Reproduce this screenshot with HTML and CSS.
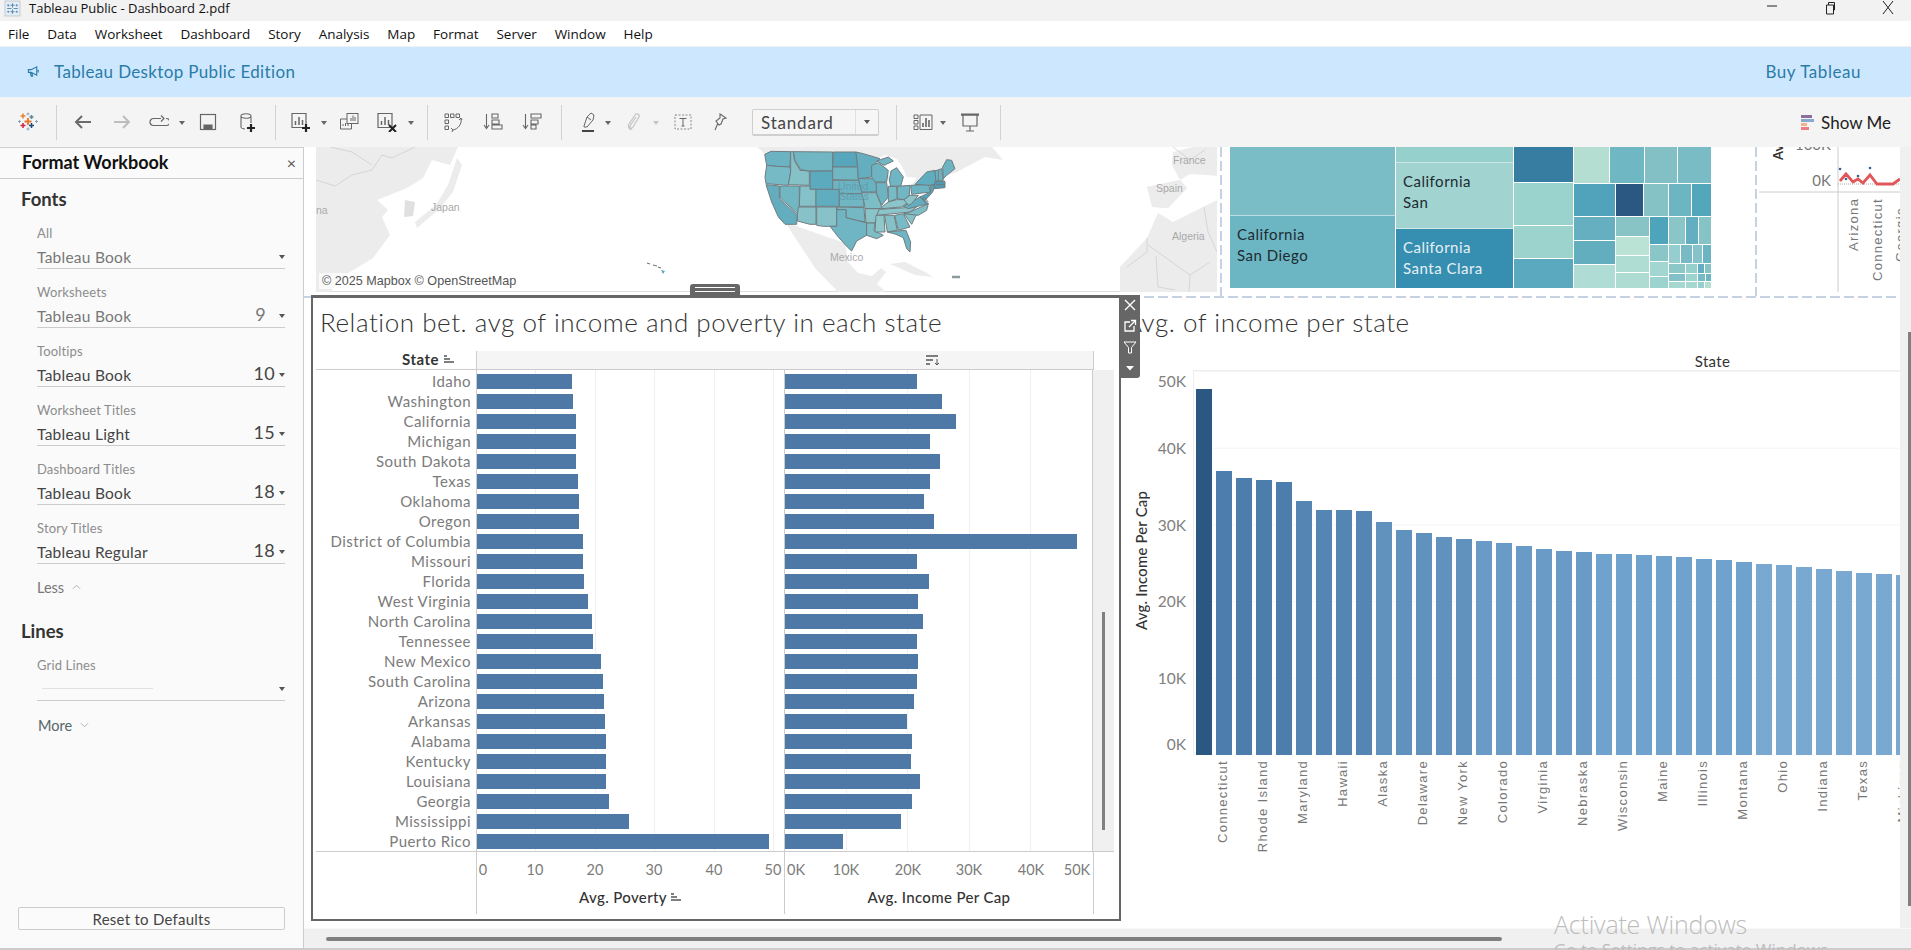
FILE: index.html
```html
<!DOCTYPE html>
<html lang="en">
<head>
<meta charset="utf-8">
<title>Tableau Public - Dashboard 2.pdf</title>
<link rel="stylesheet" href="styles.css">
</head>
<body>
<div class="app">
  <header class="titlebar">
    <svg class="app-icon" viewBox="0 0 16 16"><rect x="1" y="1" width="14" height="14" fill="#e6eef5" stroke="#c4ccd4"/><path d="M8 3v4M6 5h4M8 9v4M6 11h4M3 8h4M9 8h4M4 4v2M3 5h2M12 4v2M11 5h2M4 10v2M3 11h2M12 10v2M11 11h2" stroke="#5b8db8" fill="none"/></svg>
    <span class="title-text">Tableau Public - Dashboard 2.pdf</span>
    <div class="win-controls">
      <svg class="win-btn" viewBox="0 0 14 14"><path d="M2 5h10" stroke="#222"/></svg>
      <svg class="win-btn" viewBox="0 0 14 14"><path d="M3.500 4h7v9h-7zM5.500 4V1.500h6V9h-1" stroke="#222" fill="none"/></svg>
      <svg class="win-btn" viewBox="0 0 14 14"><path d="M2 0l10 13M12 0L2 13" stroke="#222" fill="none"/></svg>
    </div>
  </header>

  <nav class="menubar">
    <span>File</span><span>Data</span><span>Worksheet</span><span>Dashboard</span><span>Story</span><span>Analysis</span><span>Map</span><span>Format</span><span>Server</span><span>Window</span><span>Help</span>
  </nav>

  <div class="banner">
    <svg class="mega" viewBox="0 0 14 14"><path d="M1.500 5h3l6-3v9l-6-3h-3zM3.500 8l1 4h1.500l-.8-3.300M12 5v3" fill="none" stroke="#2b7da8" stroke-width="1.200"/></svg>
    <span class="banner-text">Tableau Desktop Public Edition</span>
    <span class="buy">Buy Tableau</span>
  </div>

  <div class="toolbar">
    <svg class="ic logo" viewBox="0 0 20 20" fill="none" stroke-width="1.500">
      <path d="M6.500 0v5M4 2.500h5" transform="translate(-1.500 1.500)" stroke="#e8812f"/>
      <path d="M13.500 3v4M11.500 5h4" stroke="#5b879b"/>
      <path d="M10 6v7M6.500 9.500h7" stroke="#e8762c" stroke-width="1.800"/>
      <path d="M5 11v5M2.500 13.500h5" stroke="#d0213f"/>
      <path d="M13.500 11v5M11 13.500h5" stroke="#1f4a78"/>
      <path d="M10 .5v3M8.500 2h3M10 15.500v3M8.500 17h3M1.500 8v3M0 9.500h3M18.500 8v3M17 9.500h3" stroke="#8aa4bb" stroke-width="1"/>
    </svg>
    <i class="sep g18"></i>
    <svg class="ic g16" viewBox="0 0 20 20" fill="none" stroke="#6b6b6b" stroke-width="2"><path d="M18 10H3M9 4l-6 6 6 6"/></svg>
    <svg class="ic g19" viewBox="0 0 20 20" fill="none" stroke="#bdbdbd" stroke-width="2"><path d="M2 10h15M11 4l6 6-6 6"/></svg>
    <svg class="ic g17" viewBox="0 0 20 20" fill="none" stroke="#666" stroke-width="1.200"><path d="M1 10a3.500 3.500 0 0 1 3.500-3.500H12M12 3.500l3 3-3 3M17 6.500a3.500 3.500 0 0 1 .5 7H4.500A3.500 3.500 0 0 1 1 10"/></svg>
    <i class="caret g10"></i>
    <svg class="ic g12" viewBox="0 0 20 20" fill="none" stroke="#666" stroke-width="1.200"><rect x="2.500" y="2.500" width="15" height="15"/><path d="M6 17v-4h8v4z" fill="#666"/></svg>
    <svg class="ic g19" viewBox="0 0 20 20" fill="none" stroke="#666" stroke-width="1.100"><path d="M4 4c0-3 10-3 10 0v7M4 4c0 3 10 3 10 0M4 4v11c0 1 2 2 4 2"/><path d="M14 12v8M10 16h8" stroke="#222" stroke-width="2.200"/></svg>
    <i class="sep g18"></i>
    <svg class="ic g15" viewBox="0 0 20 20" fill="none" stroke="#666" stroke-width="1.200"><path d="M1 1.500h14v14H1z"/><path d="M4.500 13V9M8 13V5M11.500 13V8" stroke-width="1.500"/><path d="M15 12v8M11 16h8" stroke="#222" stroke-width="2.200"/></svg>
    <i class="caret g10"></i>
    <svg class="ic g11" viewBox="0 0 20 20" fill="none" stroke="#666" stroke-width="1"><rect x="8" y="1.500" width="11" height="10" fill="#f4f4f4"/><path d="M8 7H1.500v10h11v-5.500"/><path d="M12 9V6M14 9V3.500M16 9V5M4 14v-2M6.500 14v-3M9 14v-2"/></svg>
    <svg class="ic g18" viewBox="0 0 20 20" fill="none" stroke="#666" stroke-width="1.200"><path d="M1 1.500h14v14H1z"/><path d="M4.500 13V9M8 13V5M11.500 13V8" stroke-width="1.500"/><path d="M12 13l7 7M19 13l-7 7" stroke="#222" stroke-width="2"/></svg>
    <i class="caret g11"></i>
    <i class="sep g12"></i>
    <svg class="ic g15" viewBox="0 0 20 20" fill="none" stroke="#666" stroke-width="1"><path d="M2 2h3.500v3.500H2zM7.500 2H11v3.500H7.500zM13 2h3.500v3.500H13zM2 8h3.500v3.500H2zM2 14h3.500v3.500H2z"/><path d="M18 7c1 5-3 10-8 11M8 16l2 2-1 2M16 8l2-2 1 2"/></svg>
    <svg class="ic g20" viewBox="0 0 20 20" fill="none" stroke="#666" stroke-width="1.100"><path d="M3.500 2v14M1 13l2.500 3.500L6 13"/><path d="M9 2h6v4H9zM9 8h7v4H9zM9 13h10v4H9z"/></svg>
    <svg class="ic g19" viewBox="0 0 20 20" fill="none" stroke="#666" stroke-width="1.100"><path d="M3.500 2v14M1 13l2.500 3.500L6 13"/><path d="M9 2h10v4H9zM9 8h7v4H9zM9 13h5v4H9z"/></svg>
    <i class="sep g19"></i>
    <svg class="ic g16" viewBox="0 0 20 20" fill="none" stroke="#666" stroke-width="1"><path d="M6 14L9 5l4-4 3 2-1 5-6 7H6zM9 5l4 3"/><path d="M4 19h12" stroke="#444" stroke-width="2"/></svg>
    <i class="caret g7"></i>
    <svg class="ic g11" viewBox="0 0 20 20" fill="none" stroke="#c6c6c6" stroke-width="1.300"><path d="M13 5l-6 9c-1 2 2 3 3 1l6-10c1-3-3-4-4-2L6 12c-2 3 1 6 3 5"/></svg>
    <i class="caret faint g10"></i>
    <svg class="ic g13" viewBox="0 0 20 20" fill="none" stroke="#888" stroke-width="1"><rect x="2" y="3" width="16" height="14" stroke-dasharray="2 1.500"/><path d="M6.500 6.500h7M10 6.500v7.500M8.500 14h3" stroke="#666"/></svg>
    <svg class="ic g17" viewBox="0 0 20 20" fill="none" stroke="#666" stroke-width="1.100"><path d="M10 2l6 4-3 1-2 5-2 1-3-4 4-3zM8 11l-3 7"/></svg>
    <div class="select g22"><span class="select-val">Standard</span><span class="select-arrow"><i class="caret dark"></i></span></div>
    <i class="sep g17"></i>
    <svg class="ic g16" viewBox="0 0 20 20" fill="none" stroke="#666" stroke-width="1"><path d="M1 3h4v3.500H1zM1 8.500h4V12H1zM1 14h4v3.500H1zM7 3h12v14.500H7z"/><path d="M10 15v-4M13 15V6M16 15V8" stroke-width="1.600"/></svg>
    <i class="caret g7"></i>
    <svg class="ic g13" viewBox="0 0 20 20" fill="none" stroke="#666" stroke-width="1.200"><path d="M1 3h18M3 3v11h14V3M10 14v5M6 19h8"/><path d="M1 2.500h18" stroke-width="2"/></svg>
    <i class="sep g20"></i>
    <div class="showme">
      <span class="sm-bars"><i class="sm1"></i><i class="sm2"></i><i class="sm3"></i><i class="sm4"></i></span>
      <span>Show Me</span>
    </div>
  </div>

  <main class="main">
    <aside class="side">
      <div class="side-head"><span>Format Workbook</span><span class="side-x">×</span></div>
      <h2 class="side-h">Fonts</h2>
      <div class="fld dim"><div class="fld-l">All</div><div class="fld-v"><span>Tableau Book</span><i class="caret dark"></i></div></div>
      <div class="fld dim"><div class="fld-l">Worksheets</div><div class="fld-v"><span>Tableau Book</span><b class="num n9">9</b><i class="caret dark"></i></div></div>
      <div class="fld"><div class="fld-l">Tooltips</div><div class="fld-v"><span>Tableau Book</span><b class="num">10</b><i class="caret dark"></i></div></div>
      <div class="fld"><div class="fld-l">Worksheet Titles</div><div class="fld-v"><span>Tableau Light</span><b class="num">15</b><i class="caret dark"></i></div></div>
      <div class="fld"><div class="fld-l">Dashboard Titles</div><div class="fld-v"><span>Tableau Book</span><b class="num">18</b><i class="caret dark"></i></div></div>
      <div class="fld"><div class="fld-l">Story Titles</div><div class="fld-v"><span>Tableau Regular</span><b class="num">18</b><i class="caret dark"></i></div></div>
      <div class="toggle"><span>Less</span><svg viewBox="0 0 10 6"><path d="M1 5l4-4 4 4" fill="none" stroke="#aaa"/></svg></div>
      <h2 class="side-h lines-h">Lines</h2>
      <div class="fld"><div class="fld-l">Grid Lines</div><div class="fld-v grid-v"><i class="sample"></i><i class="caret dark"></i></div></div>
      <div class="toggle more"><span>More</span><svg viewBox="0 0 10 6"><path d="M1 1l4 4 4-4" fill="none" stroke="#aaa"/></svg></div>
      <button class="reset">Reset to Defaults</button>
    </aside>

    <section class="workspace">
      <div class="ws-top">
        <div class="dash">
          <div class="top-row">
            <div class="map">
              <svg class="map-svg" viewBox="316 147 901 145">
                <g fill="#ececec">
                  <path d="M316 147H458L450 165 432 160 423 178 407 188 377 200 388 210 382 217 390 235 373 258 350 272 330 292H316z"/>
                  <path d="M457 158L462 165 453 192 438 210 417 228 415 222 436 205 448 185z"/>
                  <path d="M405 200L415 202 413 216 404 217z" fill="#e0e0e0"/>
                  <path d="M757 147H992L1003 160 985 157 957 172 925 183 900 186 870 170 790 162 770 158z"/>
                  <path d="M785 222L830 238 845 243 848 262 858 273 872 276 881 268 886 272 877 284 886 292H838L815 268 800 245z"/>
                  <path d="M890 264L905 262 925 272 933 277 915 275z"/>
                  <path d="M1173 152L1193 147H1217V176L1207 175 1190 174 1180 180 1147 187 1152 207 1168 208 1187 188 1180 180 1172 165z"/>
                  <path d="M1147 187L1180 180 1187 188 1168 208 1153 207z"/>
                  <path d="M1158 213L1173 222 1203 207 1217 200V292H1120V267L1147 238z"/>
                </g>
                <g fill="none" stroke="#cfcfcf" stroke-width=".8">
                  <path d="M316 180L335 186 352 175 372 170 382 155 392 158 415 147M330 147L352 152 372 165"/>
                  <path d="M1147 238L1147 252 1127 267M1148 245L1190 275 1210 262M1156 256L1158 287 1175 290M1190 275L1189 292M1204 207L1208 232 1217 252"/>
                  <path d="M1173 147L1190 160 1205 150"/>
                </g>
                <g class="map-label">
                  <text x="431" y="211">Japan</text>
                  <text x="316" y="214">na</text>
                  <text x="1173" y="164">France</text>
                  <text x="1156" y="192">Spain</text>
                  <text x="1172" y="240">Algeria</text>
                  <text x="830" y="261">Mexico</text>
                </g>
                <g transform="translate(760 147) scale(.3333)" stroke="#6f7b80" stroke-width="3" stroke-linejoin="round">
                  <path fill="#fff" stroke="none" d="M345 36L378 24 410 36 428 60 440 90 470 92 460 108 438 122 420 118 392 118 388 90 375 50z"/>
                  <path fill="#6bb3c2" d="M14 22L33 13 92 14 90 60 50 58 20 55z"/>
                  <path fill="#76bac5" d="M20 55L50 58 90 60 92 75 85 115 18 110 15 90z"/>
                  <path fill="#64adbf" d="M18 113L58 117 58 155 112 205 110 232 75 232 55 210 35 165z"/>
                  <path fill="#71b6c3" d="M60 117H118V198L112 200 60 152z"/>
                  <path fill="#85c2c8" d="M92 14H100L103 40 120 70 148 72V115L85 113 92 75z"/>
                  <path fill="#71b6c3" d="M100 14L218 15V72H148L122 68 105 40z"/>
                  <path fill="#5caabd" d="M150 73L218 72V127H150z"/>
                  <path fill="#85c1c8" d="M120 117H150V127H168V178H118z"/>
                  <path fill="#5fadbf" d="M168 127H238V178H168z"/>
                  <path fill="#86c2c8" d="M115 180H168V232H150L112 222V205z"/>
                  <path fill="#86c2c8" d="M170 180H230V238H190L170 235z"/>
                  <path fill="#58a6bb" d="M220 15H288L293 60H218z"/>
                  <path fill="#71b6c3" d="M218 60H293L295 100 218 98z"/>
                  <path fill="#6db3c2" d="M218 100H295L310 140H238V127H218z"/>
                  <path fill="#71b6c3" d="M238 140H310L312 180H238z"/>
                  <path fill="#74b8c4" d="M232 180L312 182 315 225 290 220 258 212V188H232z"/>
                  <path fill="#6fb5c3" d="M230 188H258V212L290 220 320 228V265L290 282 275 312 262 300 235 270 210 238H230z"/>
                  <path fill="#63aebf" d="M288 15L310 20 360 35 335 60V90L295 95 293 60z"/>
                  <path fill="#69b2c1" d="M295 95H345L352 125 345 135H305z"/>
                  <path fill="#7dbdc6" d="M305 137H348L362 170 365 185H315L312 165z"/>
                  <path fill="#89c4c9" d="M315 185H360L345 228H318z"/>
                  <path fill="#7dbdc6" d="M320 228H345L342 250 370 265 350 275 320 265z"/>
                  <path fill="#6db3c2" d="M335 55L355 48 385 70 380 105H345L335 90z"/>
                  <path fill="#6db3c2" d="M348 107H380L385 150 365 175 350 140z"/>
                  <path fill="#6fb5c3" d="M393 72L410 62 430 90 422 118H392L388 100z"/>
                  <path fill="#71b6c3" d="M350 42L385 30 400 42 372 55z"/>
                  <path fill="#78bac5" d="M385 118H410L412 155 385 165z"/>
                  <path fill="#71b6c3" d="M412 118L450 115 448 145 432 158 412 155z"/>
                  <path fill="#8bc5ca" d="M365 180L385 165 410 158 432 158 445 165 425 180 365 185z"/>
                  <path fill="#8bc5ca" d="M358 187L470 180 450 195 350 205z"/>
                  <path fill="#8fc8cb" d="M348 205H372L375 255H345z"/>
                  <path fill="#85c2c8" d="M374 205H402L412 250 382 255z"/>
                  <path fill="#78bac5" d="M404 205L430 200 450 240 415 250z"/>
                  <path fill="#6fb5c3" d="M382 255L415 252 438 250 452 285 450 315 440 305 430 272 408 262z"/>
                  <path fill="#85c2c8" d="M432 200H470L455 232z"/>
                  <path fill="#7dbdc6" d="M450 195L505 170 500 190 475 205 432 200z"/>
                  <path fill="#64adbf" d="M430 178L480 150 495 160 505 170 445 185z"/>
                  <path fill="#8bc5ca" d="M432 158L450 145H475L455 170 445 175z"/>
                  <path fill="#6db3c2" d="M452 115L505 112 512 135 455 142z"/>
                  <path fill="#5fadbf" d="M465 112L500 75 525 70 530 110 510 115z"/>
                  <path fill="#6db3c2" d="M548 60L560 38 575 40 585 65 560 85 550 95z"/>
                  <path fill="#6bb3c2" d="M525 72L545 65 550 100 528 103z"/>
                  <path fill="#4d9cb4" d="M525 103H555V122L522 125z"/>
                  <path fill="#55a3b8" d="M510 115H525L518 135 505 150 495 160 480 150 512 135z"/>
                  <path fill="none" d="M535 70V103M530 113H555M492 150L505 165M480 148L500 172"/>
                </g>
                <g class="us-label"><text x="838" y="190">United</text><text x="839" y="200">States</text></g>
                <path d="M647 263l3 1M653 265l4 1M658 267l3 1" stroke="#777" stroke-width="1.200"/>
                <path d="M661 270l4 1-2 3z" fill="#5aa6bc"/>
                <path d="M952 277h8" stroke="#8b9a9e" stroke-width="2.500"/>
              </svg>
              <span class="attrib">© 2025 Mapbox © OpenStreetMap</span>
            </div>
            <i class="vdash"></i>
            <div class="tree">
              <svg class="tree-svg" viewBox="1230 147 481 141">
                <rect x="1230" y="147" width="165" height="68.500" fill="#7abdc7"/>
                <rect x="1230" y="216" width="165" height="72" fill="#6cb6c4"/>
                <rect x="1396" y="147" width="117" height="15.500" fill="#96d0cd"/>
                <rect x="1396" y="163" width="117" height="65.500" fill="#a1d4d0"/>
                <rect x="1396" y="229" width="117" height="59" fill="#368eb0"/>
                <rect x="1514" y="147" width="59" height="35" fill="#367da1"/>
                <rect x="1514" y="183" width="59" height="42" fill="#9ad2ce"/>
                <rect x="1514" y="226" width="59" height="32" fill="#9cd3cd"/>
                <rect x="1514" y="259" width="59" height="29" fill="#5aa9be"/>
                <rect x="1574" y="147" width="35" height="36" fill="#b5ded3"/>
                <rect x="1610" y="147" width="34" height="36" fill="#6fb7c2"/>
                <rect x="1645" y="147" width="32" height="36" fill="#83c0c6"/>
                <rect x="1678" y="147" width="33" height="36" fill="#79bcc6"/>
                <rect x="1574" y="184" width="41" height="32" fill="#50a3bb"/>
                <rect x="1616" y="184" width="27" height="32" fill="#2b5783"/>
                <rect x="1644" y="184" width="24" height="32" fill="#85c2c6"/>
                <rect x="1669" y="184" width="22" height="32" fill="#6eb5c2"/>
                <rect x="1692" y="184" width="19" height="32" fill="#53a7bb"/>
                <rect x="1574" y="217" width="41" height="23" fill="#65afc0"/>
                <rect x="1574" y="241" width="41" height="23" fill="#62adbe"/>
                <rect x="1574" y="265" width="41" height="23" fill="#afddd6"/>
                <rect x="1616" y="217" width="33" height="19" fill="#88c4c6"/>
                <rect x="1616" y="237" width="33" height="18" fill="#bae3d6"/>
                <rect x="1616" y="256" width="33" height="16" fill="#afddd4"/>
                <rect x="1616" y="273" width="33" height="15" fill="#aedcd3"/>
                <rect x="1650" y="217" width="18" height="27" fill="#4ea4bb"/>
                <rect x="1650" y="245" width="18" height="16" fill="#8ac6c8"/>
                <rect x="1650" y="262" width="18" height="14" fill="#a3d6d0"/>
                <rect x="1650" y="277" width="18" height="11" fill="#9dd3ce"/>
                <rect x="1669" y="217" width="16" height="27" fill="#8ac5c8"/>
                <rect x="1686" y="217" width="12" height="27" fill="#63aec0"/>
                <rect x="1699" y="217" width="12" height="27" fill="#86c3c5"/>
                <rect x="1669" y="245" width="11" height="18" fill="#96ced0"/>
                <rect x="1681" y="245" width="11" height="18" fill="#79bac6"/>
                <rect x="1693" y="245" width="9" height="18" fill="#86c2c9"/>
                <rect x="1703" y="245" width="8" height="18" fill="#6db4c2"/>
                <rect x="1669" y="264" width="16" height="9" fill="#8cc8c8"/>
                <rect x="1686" y="264" width="11" height="9" fill="#96d0cd"/>
                <rect x="1698" y="264" width="6" height="9" fill="#63aec0"/>
                <rect x="1705" y="264" width="6" height="9" fill="#86c3c5"/>
                <rect x="1669" y="274" width="16" height="7" fill="#83c0c8"/>
                <rect x="1686" y="274" width="11" height="7" fill="#9dd3ce"/>
                <rect x="1698" y="274" width="7" height="7" fill="#77bac5"/>
                <rect x="1706" y="274" width="5" height="7" fill="#6eb5c2"/>
                <rect x="1669" y="282" width="16" height="6" fill="#a6d8d0"/>
                <rect x="1686" y="282" width="11" height="6" fill="#a6d8d0"/>
                <rect x="1698" y="282" width="6" height="6" fill="#96d0cd"/>
                <rect x="1705" y="282" width="6" height="6" fill="#b5ded3"/>
                <g class="tree-label">
                  <text x="1237" y="240">California</text><text x="1237" y="261">San Diego</text>
                  <text x="1403" y="187">California</text><text x="1403" y="208">San</text>
                  <text class="light" x="1403" y="253">California</text><text class="light" x="1403" y="274">Santa Clara</text>
                </g>
              </svg>
            </div>
            <i class="vdash"></i>
            <div class="mini">
              <svg class="mini-svg" viewBox="1757 147 143 149">
                <path d="M1838 147V292M1759 192H1900" stroke="#ccc" fill="none"/>
                <path d="M1838 184H1900" stroke="#aaa" stroke-dasharray="1 1"/>
                <path d="M1840 181L1846 174 1853 182 1858 179 1863 183 1870 175 1877 184H1893L1900 179" stroke="#e15759" stroke-width="2.800" fill="none"/>
                <circle cx="1840" cy="169" r="1.300" fill="#35608f"/><circle cx="1846" cy="179" r="1.300" fill="#35608f"/><circle cx="1858" cy="176" r="1.300" fill="#35608f"/><circle cx="1870" cy="168" r="1.300" fill="#35608f"/>
                <text class="mini-tick" x="1831" y="186">0K</text>
                <text class="mini-tick" x="1831" y="150">100K</text>
                <text class="mini-title" transform="translate(1783 160) rotate(-90)">Avg</text>
                <text class="mini-lab" transform="translate(1858 251) rotate(-90)">Arizona</text>
                <text class="mini-lab" transform="translate(1882 281) rotate(-90)">Connecticut</text>
                <text class="mini-lab" transform="translate(1905 262) rotate(-90)">Georgia</text>
              </svg>
            </div>
          </div>
          <div class="bottom-row">
            <div class="frame">
              <div class="handle"><i></i><i></i></div>
              <div class="frame-tools">
                <svg viewBox="0 0 14 14"><path d="M2 2l10 10M12 2L2 12" stroke="#fff" stroke-width="1.400" fill="none"/></svg>
                <svg viewBox="0 0 14 14"><path d="M7 3H2v9h9V7M6 8l6-6M8 1.500h4.500V6" stroke="#fff" stroke-width="1.300" fill="none"/></svg>
                <svg viewBox="0 0 14 14"><path d="M1 2h12L8.500 7.500V13h-3V7.500z" stroke="#fff" fill="none"/></svg>
                <svg viewBox="0 0 14 14"><path d="M3 5h8L7 9.500z" fill="#fff"/></svg>
              </div>
              <h1 class="ttl">Relation bet. avg of income and poverty in each state</h1>
              <div class="lc-head">
                <div class="lc-head-l"><span>State</span><svg class="sort-ic" viewBox="0 0 11 8"><path d="M0 1h3M0 4h6M0 7h10" stroke="#555" stroke-width="1.300"/></svg></div>
                <div class="lc-head-r"><svg class="sort-ic2" viewBox="0 0 14 11"><path d="M0 1h12M0 5h7M0 9h4" stroke="#555" stroke-width="1.500"/><path d="M11 4v6M9 8l2 2 2-2" stroke="#555" fill="none"/></svg></div>
              </div>
              <div class="lc-body">
                <div class="lc-labels">
                  <span>Idaho</span><span>Washington</span><span>California</span><span>Michigan</span><span>South Dakota</span><span>Texas</span><span>Oklahoma</span><span>Oregon</span><span>District of Columbia</span><span>Missouri</span><span>Florida</span><span>West Virginia</span><span>North Carolina</span><span>Tennessee</span><span>New Mexico</span><span>South Carolina</span><span>Arizona</span><span>Arkansas</span><span>Alabama</span><span>Kentucky</span><span>Louisiana</span><span>Georgia</span><span>Mississippi</span><span>Puerto Rico</span>
                </div>
                <div class="pane pov">
                  <i style="width:95px"></i><i style="width:96px"></i><i style="width:99px"></i><i style="width:99px"></i><i style="width:99px"></i><i style="width:101px"></i><i style="width:102px"></i><i style="width:102px"></i><i style="width:106px"></i><i style="width:106px"></i><i style="width:107px"></i><i style="width:111px"></i><i style="width:115px"></i><i style="width:116px"></i><i style="width:124px"></i><i style="width:126px"></i><i style="width:127px"></i><i style="width:128px"></i><i style="width:129px"></i><i style="width:129px"></i><i style="width:129px"></i><i style="width:132px"></i><i style="width:152px"></i><i style="width:292px"></i>
                </div>
                <div class="pane inc">
                  <i style="width:132px"></i><i style="width:157px"></i><i style="width:171px"></i><i style="width:145px"></i><i style="width:155px"></i><i style="width:145px"></i><i style="width:139px"></i><i style="width:149px"></i><i style="width:292px"></i><i style="width:132px"></i><i style="width:144px"></i><i style="width:133px"></i><i style="width:138px"></i><i style="width:132px"></i><i style="width:133px"></i><i style="width:132px"></i><i style="width:129px"></i><i style="width:122px"></i><i style="width:127px"></i><i style="width:126px"></i><i style="width:135px"></i><i style="width:127px"></i><i style="width:116px"></i><i style="width:58px"></i>
                </div>
                <div class="lc-scroll"><i></i></div>
              </div>
              <div class="lc-foot">
                <div class="foot-l"></div>
                <div class="foot-c pov-foot">
                  <div class="ticks"><span style="left:6px">0</span><span style="left:58px">10</span><span style="left:118px">20</span><span style="left:177px">30</span><span style="left:237px">40</span><span style="left:296px">50</span></div>
                  <div class="axis-title">Avg. Poverty<svg class="sort-ic" viewBox="0 0 11 8"><path d="M0 1h3M0 4h6M0 7h10" stroke="#555" stroke-width="1.300"/></svg></div>
                </div>
                <div class="foot-c">
                  <div class="ticks"><span style="left:11px">0K</span><span style="left:61px">10K</span><span style="left:123px">20K</span><span style="left:184px">30K</span><span style="left:246px">40K</span><span style="left:292px">50K</span></div>
                  <div class="axis-title">Avg. Income Per Cap</div>
                </div>
              </div>
            </div>
            <div class="rpanel">
              <h1 class="ttl rttl">Avg. of income per state</h1>
              <div class="r-state"><span>State</span></div>
              <div class="r-plot">
                <div class="r-ytitle"><span>Avg. Income Per Cap</span></div>
                <div class="r-yaxis"><span style="top:1px">50K</span><span style="top:68px">40K</span><span style="top:145px">30K</span><span style="top:221px">20K</span><span style="top:298px">10K</span><span style="top:364px">0K</span></div>
                <div class="r-bars">
                  <i class="c0" style="height:366px"></i><i class="c1" style="height:284px"></i><i class="c1" style="height:277px"></i><i class="c1" style="height:275px"></i><i class="c1" style="height:273px"></i><i class="c2" style="height:254px"></i><i class="c2" style="height:245px"></i><i class="c2" style="height:245px"></i><i class="c2" style="height:244px"></i><i class="c3" style="height:233px"></i><i class="c3" style="height:225px"></i><i class="c3" style="height:222px"></i><i class="c3" style="height:218px"></i><i class="c3" style="height:216px"></i><i class="c4" style="height:214px"></i><i class="c4" style="height:212px"></i><i class="c4" style="height:209px"></i><i class="c4" style="height:206px"></i><i class="c4" style="height:204px"></i><i class="c4" style="height:203px"></i><i class="c5" style="height:201px"></i><i class="c5" style="height:201px"></i><i class="c5" style="height:200px"></i><i class="c5" style="height:199px"></i><i class="c5" style="height:198px"></i><i class="c5" style="height:196px"></i><i class="c5" style="height:195px"></i><i class="c5" style="height:193px"></i><i class="c6" style="height:191px"></i><i class="c6" style="height:190px"></i><i class="c6" style="height:188px"></i><i class="c6" style="height:186px"></i><i class="c6" style="height:184px"></i><i class="c6" style="height:182px"></i><i class="c6" style="height:181px"></i><i class="c6" style="height:180px"></i>
                </div>
              </div>
              <div class="r-labels">
                <span>Connecticut</span><span>Rhode Island</span><span>Maryland</span><span>Hawaii</span><span>Alaska</span><span>Delaware</span><span>New York</span><span>Colorado</span><span>Virginia</span><span>Nebraska</span><span>Wisconsin</span><span>Maine</span><span>Illinois</span><span>Montana</span><span>Ohio</span><span>Indiana</span><span>Texas</span><span>Michigan</span>
              </div>
            </div>
          </div>
        </div>
        <div class="vscroll"><i></i></div>
      </div>
      <div class="hscroll"><i></i></div>
    </section>
  </main>

  <div class="watermark">
    <div class="wm1">Activate Windows</div>
    <div class="wm2">Go to Settings to activate Windows.</div>
  </div>
</div>
</body>
</html>
```

FILE: styles.css
```css
* { box-sizing: border-box; }
html, body { margin: 0; padding: 0; height: 100%; overflow: hidden; }
body { font-family: "Lato", "Liberation Sans", sans-serif; color: #333; background: #fff; }
h1, h2 { margin: 0; font-weight: normal; }
i { display: block; font-style: normal; }

.app { width: 1911px; height: 950px; display: flex; flex-direction: column; position: relative; overflow: hidden; }

/* window chrome */
.titlebar { height: 21px; flex: none; background: #f2f2f2; display: flex; align-items: center; padding-left: 4px; font: 13px/21px "Open Sans", sans-serif; color: #111; }
.app-icon { width: 17px; height: 17px; margin-top: -4px; }
.title-text { margin-left: 8px; margin-top: -5px; }
.win-controls { margin-left: auto; display: flex; margin-right: 16px; margin-top: -5px; gap: 44px; }
.win-btn { width: 14px; height: 14px; }

.menubar { height: 26px; flex: none; background: #fff; display: flex; align-items: center; gap: 17.900px; padding: 0 0 0 8px; font: 13.500px "Open Sans", sans-serif; color: #111; border-bottom: 1px solid #f0f0f0; }

.banner { height: 50px; flex: none; background: #cde8fe; display: flex; align-items: center; padding: 0 50px 2px 27px; color: #2a7ba8; font-size: 17px; }
.mega { width: 13px; height: 13px; margin-right: 14px; }
.banner-text { letter-spacing: .35px; }
.buy { margin-left: auto; letter-spacing: .55px; }

/* toolbar */
.toolbar { height: 50px; flex: none; background: #f4f4f4; display: flex; align-items: center; padding: 0 20px 0 18px; }
.ic { width: 20px; height: 20px; flex: none; }
.sep { width: 1px; height: 35px; flex: none; background: #d2d2d2; }
.caret { width: 0; height: 0; flex: none; margin-left: 0; border-left: 3.500px solid transparent; border-right: 3.500px solid transparent; border-top: 4px solid #666; }
.toolbar .caret { margin-right: 1px; margin-top: 1px; }
.caret.faint { border-top-color: #c4c4c4; }
.caret.dark { border-top-color: #555; }
.g7 { margin-left: 7px; } .g9 { margin-left: 9px; } .g10 { margin-left: 10px; } .g11 { margin-left: 11px; }
.g12 { margin-left: 12px; } .g13 { margin-left: 13px; } .g15 { margin-left: 15px; } .g16 { margin-left: 16px; }
.g17 { margin-left: 17px; } .g18 { margin-left: 18px; } .g19 { margin-left: 19px; } .g20 { margin-left: 20px; } .g22 { margin-left: 22px; }
.select { width: 127px; height: 27px; flex: none; display: flex; background: #f6f6f6; border: 1px solid #cfcfcf; border-bottom-width: 2px; border-radius: 2px; font-size: 17px; color: #444; }
.select-val { width: 103px; padding-left: 8px; line-height: 25px; letter-spacing: .8px; border-right: 1px solid #e0e0e0; white-space: nowrap; }
.select-arrow { flex: 1; display: flex; align-items: center; justify-content: center; }
.showme { margin-left: auto; display: flex; align-items: center; gap: 7px; font-size: 17px; color: #222; }
.sm-bars { width: 13px; display: flex; flex-direction: column; gap: 1px; }
.sm-bars i { height: 3px; }
.sm1 { width: 11px; background: #8b6f9e; } .sm2 { width: 13px; background: #88a8cf; } .sm3 { width: 6px; background: #f3b28a; } .sm4 { width: 8px; background: #ef7b85; }

/* main */
.main { flex: 1; min-height: 0; display: flex; }
.side { width: 304px; flex: none; background: #fafafa; border-top: 1px solid #d0d0d0; border-right: 1px solid #ccc; border-bottom: 2px solid #ccc; display: flex; flex-direction: column; }
.side-head { height: 31px; flex: none; border-bottom: 1px solid #ccc; padding: 0 7px 2px 22px; display: flex; align-items: center; justify-content: space-between; font-size: 18px; font-weight: 700; color: #111; }
.side-x { font-weight: 400; color: #555; font-size: 16px; }
.side-h { height: 42px; flex: none; line-height: 40px; padding-left: 21px; font-size: 18.500px; font-weight: 700; color: #333; }
.lines-h { margin-top: 11px; height: 43px; line-height: 43px; }
.fld { margin: 0 18px 11px 37px; flex: none; }
.fld-l { height: 24px; line-height: 24px; font-size: 13px; color: #8c8c8c; letter-spacing: .15px; }
.fld-v { height: 24px; border-bottom: 1px solid #ccc; display: flex; align-items: center; font-size: 15.500px; letter-spacing: .25px; color: #444; padding-top: 0; }
.fld-v .caret { margin-left: 4px; margin-right: 0; }
.fld-v > .caret:first-child { margin-left: auto; }
.fld.dim .fld-v { color: #777; }
.fld-v span + .caret { margin-left: auto; }
.num { margin-left: auto; font-weight: 400; font-size: 18px; margin-top: -3px; }
.num.n9 { margin-right: 9px; }
.grid-v { height: 24px; padding-top: 0; }
.sample { width: 111px; height: 1px; margin-left: 5px; background: #e0e0e0; margin-right: auto; margin-top: -1px; }
.toggle { height: 24px; flex: none; margin-left: 37px; display: flex; align-items: center; gap: 8px; font-size: 14.500px; color: #777; }
.toggle svg { width: 9px; height: 6px; }
.toggle.more { color: #566; margin-left: 38px; margin-top: 1px; }
.reset { margin: auto 18px 18px 18px; height: 23px; flex: none; border: 1px solid #ccc; border-radius: 2px; background: #fbfbfb; font: 15px "Lato", sans-serif; letter-spacing: .25px; color: #444; padding: 0; }

.workspace { flex: 1; min-width: 0; display: flex; flex-direction: column; }
.ws-top { flex: 1; min-height: 0; display: flex; }
.dash { flex: 1; min-width: 0; display: flex; flex-direction: column; background: #fff; }
.vscroll { width: 11px; flex: none; background: #f0f0f0; padding-top: 185px; }
.vscroll i { width: 3px; height: 574px; margin-left: 8px; background: #808080; }
.hscroll { height: 22px; flex: none; background: #f0f0f0; border-top: 1px solid #f8f8f8; border-bottom: 2px solid #ccc; padding-top: 8px; }
.hscroll i { width: 1176px; height: 4px; margin-left: 22px; background: #808080; border-radius: 2px; }

/* top row */
.top-row { height: 151px; flex: none; display: flex; padding-left: 12px; position: relative; background-image: repeating-linear-gradient(90deg, #c6d1e4 0 10px, transparent 10px 14px); background-size: 100% 2px; background-position: 0 bottom; background-repeat: no-repeat; }
.map { width: 901px; height: 145px; flex: none; position: relative; border-bottom: 1px solid #ddd; }
.map-svg { display: block; width: 901px; height: 145px; }
.map-label { font: 10.500px "Liberation Sans", sans-serif; fill: #a9a9a9; }
.us-label { font: 10.500px "Liberation Sans", sans-serif; fill: #5f9fb0; }
.attrib { position: absolute; left: 3px; bottom: 2px; background: rgba(255,255,255,.75); padding: 0 3px; font: 12.600px/16px "Liberation Sans", sans-serif; color: #555; }
.vdash { width: 2px; height: 149px; flex: none; margin-left: 3px; background-image: repeating-linear-gradient(180deg, #c6d1e4 0 10px, transparent 10px 14px); }
.tree { width: 533px; flex: none; padding-left: 8px; }
.tree + .vdash { margin-left: 0; }
.tree-svg { display: block; width: 481px; height: 141px; }
.tree-label { font: 15px "Lato", sans-serif; letter-spacing: .5px; fill: #1e2a30; }
.tree-label .light { fill: #e6f1f5; }
.mini { flex: 1; min-width: 0; overflow: hidden; }
.mini-svg { display: block; width: 143px; height: 149px; }
.mini-tick { font: 15px "Lato", sans-serif; fill: #777; text-anchor: end; }
.mini-title { font: 700 13px "Lato", sans-serif; fill: #333; }
.mini-lab { font: 13px "Liberation Sans", sans-serif; letter-spacing: 1.300px; fill: #777; }

/* bottom row */
.bottom-row { flex: 1; min-height: 0; display: flex; padding-left: 7px; }
.frame { width: 810px; height: 626px; flex: none; margin-top: -3px; position: relative; z-index: 2; background: #fff; border: 2px solid #666; border-top-width: 3px; padding-left: 3px; display: flex; flex-direction: column; }
.handle { position: absolute; left: 377px; top: -14px; width: 50px; height: 12px; background: #666; border-radius: 3px 3px 0 0; padding: 3px 5px 0; display: flex; flex-direction: column; gap: 3px; }
.handle i { height: 1px; background: #fff; }
.frame-tools { position: absolute; left: 806px; top: -3px; width: 21px; height: 83px; background: #666; border-radius: 0 0 3px 0; display: flex; flex-direction: column; align-items: center; padding-top: 3px; gap: 7px; }
.frame-tools svg { width: 14px; height: 14px; }

.ttl { height: 53px; line-height: 48px; flex: none; font-size: 26px; font-weight: 300; letter-spacing: .55px; color: #333; white-space: nowrap; }
.frame .ttl { padding-left: 4px; }
.lc-head { height: 19px; flex: none; width: 778px; display: flex; border-bottom: 1px solid #ccc; }
.lc-head-l { width: 160px; flex: none; padding: 0 21px 2px 0; display: flex; align-items: center; justify-content: flex-end; gap: 1px; font-size: 15px; letter-spacing: .5px; color: #333; font-weight: 700; }
.sort-ic { width: 11px; height: 8px; margin-left: 4px; }
.lc-head-r { flex: 1; background: #f5f5f5; border-left: 1px solid #ccc; border-right: 1px solid #ccc; display: flex; align-items: center; justify-content: flex-end; padding-right: 153px; }
.sort-ic2 { width: 14px; height: 11px; }
.lc-body { height: 482px; flex: none; display: flex; border-bottom: 1px solid #ccc; width: 798px; position: relative; }
.lc-labels { width: 160px; flex: none; display: flex; flex-direction: column; padding-top: 1px; }
.lc-labels span { height: 20px; line-height: 20px; text-align: right; padding-right: 5px; font-size: 15px; letter-spacing: .45px; color: #7b7b7b; white-space: nowrap; }
.pane { flex: none; border-left: 1px solid #ccc; display: flex; flex-direction: column; padding-top: 4px; gap: 5px; }
.pane i { height: 15px; background: #4e79a7; }
.pov { width: 308px; background-image: repeating-linear-gradient(90deg, transparent 0 58.400px, #efefef 58.400px 59.400px); }
.inc { width: 309px; border-right: 1px solid #ccc; background-image: repeating-linear-gradient(90deg, transparent 0 60.500px, #efefef 60.500px 61.500px); }
.lc-scroll { width: 21px; flex: none; background: #f0f0f0; margin-right: 0; }
.lc-scroll i { width: 3px; height: 218px; margin: 242px 0 0 9px; background: #808080; }

.lc-foot { height: 62px; flex: none; display: flex; width: 778px; }
.foot-l { width: 160px; flex: none; border-right: 0; }
.foot-c { flex: none; width: 308px; border-left: 1px solid #ccc; }
.foot-c:last-child { width: 310px; border-right: 1px solid #ccc; }
.ticks { position: relative; height: 32px; }
.ticks span { position: absolute; top: 9px; font-size: 14.500px; line-height: 18px; color: #7b7b7b; transform: translateX(-50%); }
.axis-title { height: 28px; line-height: 26px; display: flex; justify-content: center; align-items: center; font-size: 15px; letter-spacing: .35px; font-weight: 500; color: #333; padding-bottom: 2px; }

.rpanel { flex: 1; min-width: 0; padding-left: 4px; overflow: hidden; display: flex; flex-direction: column; }
.rttl { margin-left: 0; }
.r-state { height: 20px; flex: none; margin-left: 68px; border-bottom: 1px solid #eee; text-align: center; font-size: 15px; line-height: 21px; color: #333; letter-spacing: .3px; padding-left: 332px; }
.r-plot { height: 384px; flex: none; display: flex; }
.r-ytitle { width: 39px; flex: none; display: flex; align-items: center; justify-content: center; padding: 0 8px 6px 0; }
.r-ytitle span { writing-mode: vertical-rl; transform: rotate(180deg); font-size: 14.900px; font-weight: 500; letter-spacing: .2px; color: #333; white-space: nowrap; }
.r-yaxis { width: 29px; flex: none; position: relative; }
.r-yaxis span { position: absolute; right: 7px; font-size: 15.500px; line-height: 18px; color: #808080; }
.r-bars { flex: 1; min-width: 0; display: flex; align-items: flex-end; gap: 4px; padding-left: 2px; overflow: hidden; border-left: 1px solid #eee; background-image: linear-gradient(#f5f5f5 1px, transparent 1px); background-size: 100% 76.700px; background-position: 0 0; }
.r-bars i { width: 16px; flex: none; }
.c0 { background: #2b5783; } .c1 { background: #4c7dac; } .c2 { background: #5485b3; } .c3 { background: #6092bd; }
.c4 { background: #699bc6; } .c5 { background: #6fa2cc; } .c6 { background: #79a9d1; }
.r-labels { flex: 1; min-height: 0; margin-left: 78px; display: flex; overflow: hidden; padding-top: 5px; }
.r-labels span { width: 40px; flex: none; display: flex; justify-content: center; }
.r-labels span { writing-mode: vertical-rl; transform: rotate(180deg); height: max-content; text-align: left; font: 13px/40px "Liberation Sans", sans-serif; letter-spacing: 1.300px; color: #777; white-space: nowrap; }

.watermark { position: absolute; left: 1554px; top: 908px; color: #bdbdbd; font-family: "Open Sans", sans-serif; pointer-events: none; }
.wm1 { font-size: 25px; line-height: 32px; font-weight: 300; letter-spacing: -.2px; }
.wm2 { font-size: 17px; line-height: 20px; white-space: nowrap; }
```
